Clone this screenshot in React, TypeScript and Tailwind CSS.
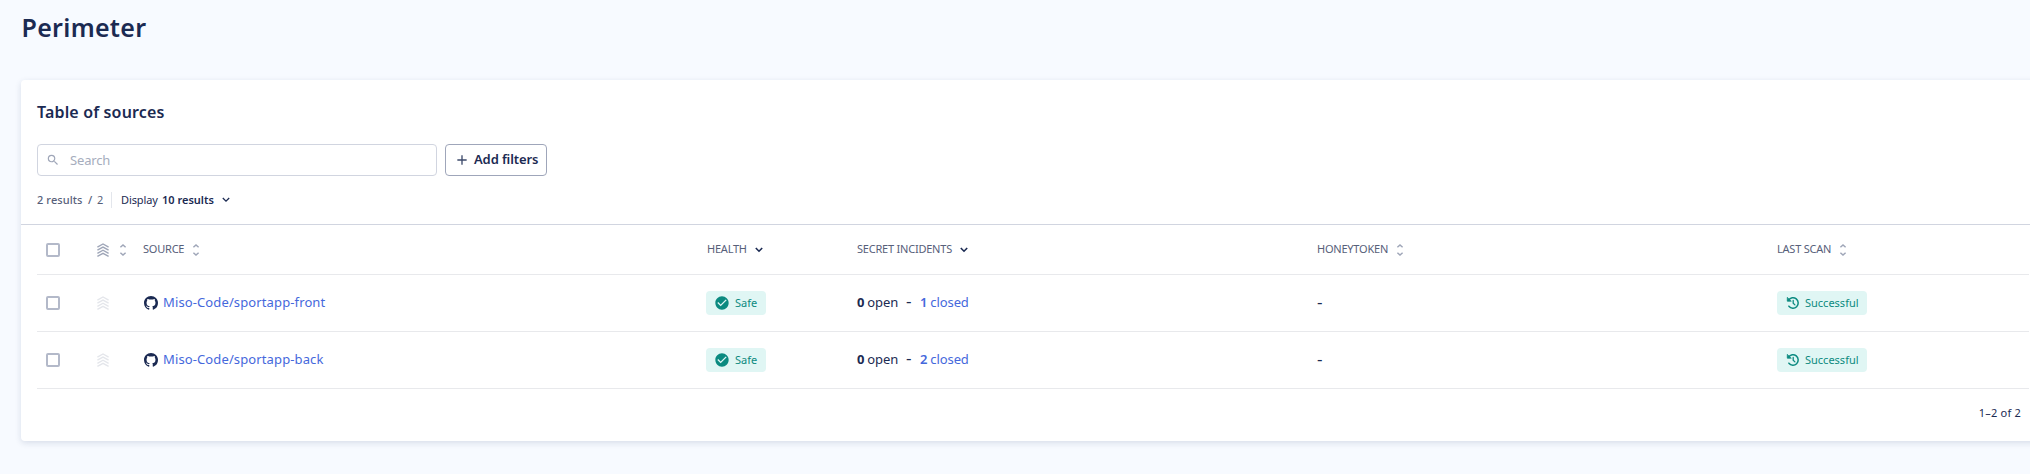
import type { ReactNode } from "react";
import { MdAdd, MdCheckCircle, MdSearch } from "react-icons/md";

function Checkbox() {
  return <span className="block h-[14px] w-[14px] rounded-[2px] border-2 border-[#b3b9c9]" />;
}

function StackIcon({ className }: { className: string }) {
  return (
    <svg width="12" height="14" viewBox="0 0 12 14" fill="none" strokeWidth="1.4" className={className}>
      <path d="M.4 4.1 6 1l5.6 3.1M.4 7.2 6 4.1l5.6 3.1M.4 10.3 6 7.2l5.6 3.1M.4 13.4 6 10.3l5.6 3.1" />
    </svg>
  );
}

function SortIcon() {
  return (
    <svg width="8" height="12" viewBox="0 0 8 12" fill="none" strokeWidth="1.5" className="stroke-[#9fa6b8]">
      <path d="M1.4 3.2 4 1l2.6 2.2M1.4 8.8 4 11l2.6-2.2" />
    </svg>
  );
}

function GithubIcon() {
  return (
    <svg width="14" height="14" viewBox="0 0 16 16" fill="currentColor">
      <path d="M8 0C3.58 0 0 3.58 0 8c0 3.54 2.29 6.53 5.47 7.59.4.07.55-.17.55-.38 0-.19-.01-.82-.01-1.49-2.01.37-2.53-.49-2.69-.94-.09-.23-.48-.94-.82-1.13-.28-.15-.68-.52-.01-.53.63-.01 1.08.58 1.23.82.72 1.21 1.87.87 2.33.66.07-.52.28-.87.51-1.07-1.78-.2-3.64-.89-3.64-3.95 0-.87.31-1.59.82-2.15-.08-.2-.36-1.02.08-2.12 0 0 .67-.21 2.2.82.64-.18 1.32-.27 2-.27s1.36.09 2 .27c1.53-1.04 2.2-.82 2.2-.82.44 1.1.16 1.92.08 2.12.51.56.82 1.27.82 2.15 0 3.07-1.87 3.75-3.65 3.95.29.25.54.73.54 1.48 0 1.07-.01 1.93-.01 2.2 0 .21.15.46.55.38A8.01 8.01 0 0 0 16 8c0-4.42-3.58-8-8-8Z" />
    </svg>
  );
}

function HistoryIcon() {
  return (
    <svg width="14" height="14" viewBox="0 0 14 14" fill="none" stroke="currentColor" strokeWidth="1.5" strokeLinecap="round">
      <path d="M2.6 4.2A5.2 5.2 0 1 1 2.9 10.2" />
      <path d="M7.2 4.4V7.2l1.7 1.7" strokeWidth="1.3" />
      <path d="M1.3 1.7v3.5h3.6Z" fill="currentColor" strokeWidth=".8" strokeLinejoin="round" />
    </svg>
  );
}

function Chevron({ className }: { className: string }) {
  return (
    <svg width="8" height="6" viewBox="0 0 8 6" fill="none" className={className}>
      <path d="M.8 1 4 4.2 7.2 1" />
    </svg>
  );
}

function Heading({ children }: { children: ReactNode }) {
  return (
    <span className="pb-[2px] text-[11px] leading-[14px] tracking-[-0.22px] text-[#57607a] whitespace-nowrap">
      {children}
    </span>
  );
}

const rows = [
  { name: "Miso-Code/sportapp-front", closed: 1 },
  { name: "Miso-Code/sportapp-back", closed: 2 },
];

export default function App() {
  return (
    <div className="h-[474px] w-[2030px] overflow-hidden bg-[#f7faff] pl-[21px] font-['Noto_Sans','Open_Sans',sans-serif] text-[#1b2a52]">
      <h1 className="h-[80px] pt-[9px] pl-[0.5px] text-[25px] leading-[36px] font-semibold tracking-[0.3px]">Perimeter</h1>
      <main className="h-[361px] w-[2030px] rounded-[4px] bg-white shadow-[0_2px_6px_rgba(30,50,100,0.14)]">
        <div className="flex h-[144px] flex-col px-4">
          <h2 className="mt-[20px] text-[16px] leading-[24px] font-semibold tracking-[0.15px]">Table of sources</h2>
          <div className="mt-[20px] flex gap-2">
            <div className="flex h-8 w-[400px] items-center rounded-[4px] border border-[#d1d5e0] pl-[8px]">
              <MdSearch size={14} className="text-[#9fa6b8]" />
              <span className="ml-[10px] text-[13px] leading-none tracking-[-0.15px] text-[#a6adbd]">Search</span>
            </div>
            <button className="flex h-8 w-[102px] items-center rounded-[4px] border border-[#9fa6ba] pl-[8px]">
              <MdAdd size={16} className="text-[#3d4a6b]" />
              <span className="ml-[4px] pb-[2px] text-[13px] leading-none font-semibold tracking-[-0.12px] whitespace-nowrap">Add filters</span>
            </button>
          </div>
          <div className="mt-[16px] flex h-4 items-center text-[11px] leading-none whitespace-nowrap">
            <span className="flex w-[74px] pb-[2px] text-[#57607a]">
              <span className="w-[51px] font-medium tracking-[0.1px]">2 results</span>
              <span className="w-[9px] font-medium">/</span>
              <span>2</span>
            </span>
            <span className="h-4 w-px bg-[#e3e6ec]" />
            <span className="ml-[9px] w-[41px] pb-[2px] tracking-[-0.1px]">Display</span>
            <span className="w-[60px] pb-[2px] font-semibold">10 results</span>
            <Chevron className="stroke-[#1b2a52] stroke-[1.3]" />
          </div>
        </div>
        <div className="h-px w-[2009px] bg-[#d1d5e0]" />
        <div className="ml-4 w-[1992px]">
          <div className="flex h-[50px] items-center border-b border-[#e8e9ec]">
            <div className="w-[60px] pl-[9px]"><Checkbox /></div>
            <div className="flex w-[46px] items-center gap-[10px]">
              <StackIcon className="stroke-[#9fa6b8]" />
              <SortIcon />
            </div>
            <div className="flex w-[564px] items-center gap-[8px]"><Heading>SOURCE</Heading><SortIcon /></div>
            <div className="flex w-[150px] items-center gap-[8px]"><Heading>HEALTH</Heading><Chevron className="stroke-[#1b2a52] stroke-[1.6]" /></div>
            <div className="flex w-[460px] items-center gap-[8px]"><Heading>SECRET INCIDENTS</Heading><Chevron className="stroke-[#1b2a52] stroke-[1.6]" /></div>
            <div className="flex w-[460px] items-center gap-[8px]"><Heading>HONEYTOKEN</Heading><SortIcon /></div>
            <div className="flex items-center gap-[8px]"><Heading>LAST SCAN</Heading><SortIcon /></div>
          </div>
          {rows.map((row) => (
            <div key={row.name} className="flex h-[57px] items-center border-b border-[#e8e9ec] text-[13px] leading-[18px] whitespace-nowrap">
              <div className="w-[60px] pl-[9px]"><Checkbox /></div>
              <div className="w-[46px]"><StackIcon className="stroke-[#e4e6eb]" /></div>
              <div className="flex w-[563px] items-center gap-[5px] pl-[1px]">
                <GithubIcon />
                <span className="pb-[2px] tracking-[0.12px] text-[#4568dc]">{row.name}</span>
              </div>
              <div className="w-[151px]">
                <span className="flex h-6 w-[60px] items-center rounded-[4px] bg-[#e0f6f4] pl-[8px] text-[#0b8a80]">
                  <MdCheckCircle size={16} />
                  <span className="ml-[5px] text-[11px]">Safe</span>
                </span>
              </div>
              <div className="flex w-[460px] items-baseline pb-[3px] tracking-[-0.1px]">
                <span className="w-[49px]"><b className="mr-[3px] font-bold">0</b>open</span>
                <span className="w-[14px] text-[17px] leading-none">-</span>
                <span className="text-[#4568dc]"><b className="mr-[3px] font-semibold">{row.closed}</b>closed</span>
              </div>
              <div className="w-[460px] pb-[2px] text-[17px]">-</div>
              <span className="flex h-6 w-[90px] items-center rounded-[4px] bg-[#e0f6f4] pl-[9px] text-[#0b8a80]">
                <HistoryIcon />
                <span className="ml-[5px] text-[11px]">Successful</span>
              </span>
            </div>
          ))}
          <div className="flex h-[48px] items-center justify-end pr-[8px] text-[11px] tracking-[0.2px]">1–2 of 2</div>
        </div>
      </main>
    </div>
  );
}
